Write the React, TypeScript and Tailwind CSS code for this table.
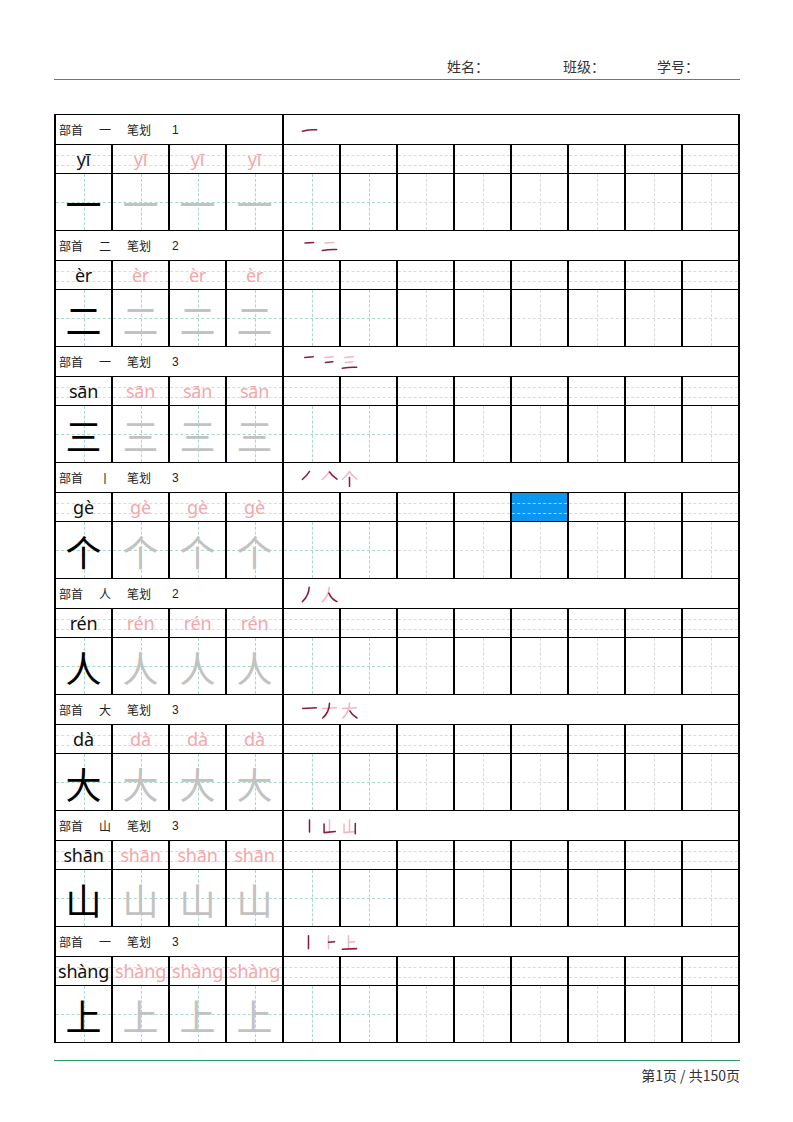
import React from "react";

type Entry = {
  radical: string;
  count: number;
  pinyin: string;
  char: string;
  strokes: string[];
};

// 笔顺：每一笔的路径，坐标系 0-100
const entries: Entry[] = [
  { radical: "一", count: 1, pinyin: "yī", char: "一", strokes: ["M8 54 Q50 44 92 46"] },
  {
    radical: "二",
    count: 2,
    pinyin: "èr",
    char: "二",
    strokes: ["M24 30 L74 27", "M8 74 Q50 66 92 68"],
  },
  {
    radical: "一",
    count: 3,
    pinyin: "sān",
    char: "三",
    strokes: ["M22 20 L72 16", "M26 50 L70 46", "M8 84 Q50 76 92 78"],
  },
  {
    radical: "丨",
    count: 3,
    pinyin: "gè",
    char: "个",
    strokes: ["M50 8 Q34 34 8 56", "M50 12 Q66 36 94 54", "M50 44 L50 96"],
  },
  {
    radical: "人",
    count: 2,
    pinyin: "rén",
    char: "人",
    strokes: ["M48 8 Q46 56 8 92", "M46 42 Q60 76 94 92"],
  },
  {
    radical: "大",
    count: 3,
    pinyin: "dà",
    char: "大",
    strokes: ["M10 38 L90 34", "M50 8 Q48 62 10 94", "M52 52 Q66 78 94 94"],
  },
  {
    radical: "山",
    count: 3,
    pinyin: "shān",
    char: "山",
    strokes: ["M50 12 L50 82", "M18 36 L18 86 L84 80", "M84 32 L84 92"],
  },
  {
    radical: "一",
    count: 3,
    pinyin: "shàng",
    char: "上",
    strokes: ["M44 10 L44 86", "M44 48 L80 46", "M8 90 L92 86"],
  },
];

const StrokeOrder = ({ strokes }: { strokes: string[] }) => (
  <div className="flex items-center gap-[3px] pl-[17px] pt-[2px]">
    {strokes.map((_, step) => (
      <svg key={step} viewBox="0 0 100 100" className="w-[17px] h-[17px]">
        {strokes.slice(0, step + 1).map((d, i) => (
          <path
            key={i}
            d={d}
            fill="none"
            stroke={i === step ? "#8b1a3c" : "#f2b6c0"}
            strokeWidth={9}
            strokeLinecap="round"
            strokeLinejoin="round"
          />
        ))}
      </svg>
    ))}
  </div>
);

const PinyinCell = ({
  text,
  color,
  blue,
}: {
  text?: string;
  color?: string;
  blue?: boolean;
}) => (
  <div className={blue ? "relative bg-[#0b96ef]" : "relative bg-white"}>
    <div
      className={
        blue
          ? "absolute left-0 right-0 top-[10px] border-t border-dashed border-[#a6d6f8]"
          : "absolute left-0 right-0 top-[10px] border-t border-dashed border-[#dadada]"
      }
    />
    <div
      className={
        blue
          ? "absolute left-0 right-0 top-[20px] border-t border-dashed border-[#a6d6f8]"
          : "absolute left-0 right-0 top-[20px] border-t border-dashed border-[#dadada]"
      }
    />
    {text && (
      <div
        className={`relative text-center text-[18px] leading-[28px] whitespace-nowrap tracking-[-0.2px] font-['Noto_Sans','Open_Sans',sans-serif] ${color}`}
      >
        {text}
      </div>
    )}
  </div>
);

const CharCell = ({
  char,
  color,
  green,
}: {
  char?: string;
  color?: string;
  green?: boolean;
}) => (
  <div className="relative bg-white flex items-center justify-center">
    <div
      className={
        green
          ? "absolute top-0 bottom-0 left-1/2 border-l border-dashed border-[#a9d9c6]"
          : "absolute top-0 bottom-0 left-1/2 border-l border-dashed border-[#dadada]"
      }
    />
    <div
      className={
        green
          ? "absolute left-0 right-0 top-1/2 border-t border-dashed border-[#a9d9c6]"
          : "absolute left-0 right-0 top-1/2 border-t border-dashed border-[#dadada]"
      }
    />
    {char && (
      <span
        className={`relative pt-[2px] text-[36px] leading-[54px] font-normal font-['Noto_Sans_CJK_SC',sans-serif] ${color}`}
      >
        {char}
      </span>
    )}
  </div>
);

const Block = ({ entry, index }: { entry: Entry; index: number }) => (
  <div className="grid grid-cols-12 grid-rows-[29px_28px_56px] gap-x-[2px] gap-y-px">
    <div className="col-span-4 bg-white flex items-center pl-[3px] pt-px text-[12px] text-[#222]">
      <span className="w-[40px]">部首</span>
      <span className="w-[12px] text-center">{entry.radical}</span>
      <span className="w-[16px]" />
      <span className="w-[45px]">笔划</span>
      <span className="font-['Liberation_Sans',sans-serif]">{entry.count}</span>
    </div>
    <div className="col-span-8 bg-white flex items-center">
      <StrokeOrder strokes={entry.strokes} />
    </div>

    <PinyinCell text={entry.pinyin} color="text-[#111]" />
    <PinyinCell text={entry.pinyin} color="text-[#f3a7aa]" />
    <PinyinCell text={entry.pinyin} color="text-[#f3a7aa]" />
    <PinyinCell text={entry.pinyin} color="text-[#f3a7aa]" />
    {Array.from({ length: 8 }).map((_, i) => (
      <PinyinCell key={i} blue={index === 3 && i === 4} />
    ))}

    <CharCell char={entry.char} color="text-black" green />
    <CharCell char={entry.char} color="text-[#c2c2c2]" green />
    <CharCell char={entry.char} color="text-[#c2c2c2]" green />
    <CharCell char={entry.char} color="text-[#c2c2c2]" green />
    {Array.from({ length: 8 }).map((_, i) => (
      <CharCell key={i} green={i < 2} />
    ))}
  </div>
);

export default function App() {
  return (
    <div className="w-[793px] h-[1122px] bg-white text-[#333] font-['Noto_Sans_CJK_SC',sans-serif]">
      <div className="ml-[54px] w-[686px] pt-[56px] pb-[3px] border-b border-[#2f9a64] flex text-[14px] leading-[20px]">
        <span className="ml-[393px] w-[116px]">姓名：</span>
        <span className="w-[94px]">班级：</span>
        <span>学号：</span>
      </div>

      <div className="ml-[54px] mt-[34px] w-[686px] bg-black px-[2px] py-px flex flex-col gap-px">
        {entries.map((e, i) => (
          <Block key={i} entry={e} index={i} />
        ))}
      </div>

      <div className="ml-[54px] mt-[17px] w-[686px] border-t border-[#2f9a64] pt-[4px] text-right text-[14px] leading-[20px]">
        第1页 / 共150页
      </div>
    </div>
  );
}
